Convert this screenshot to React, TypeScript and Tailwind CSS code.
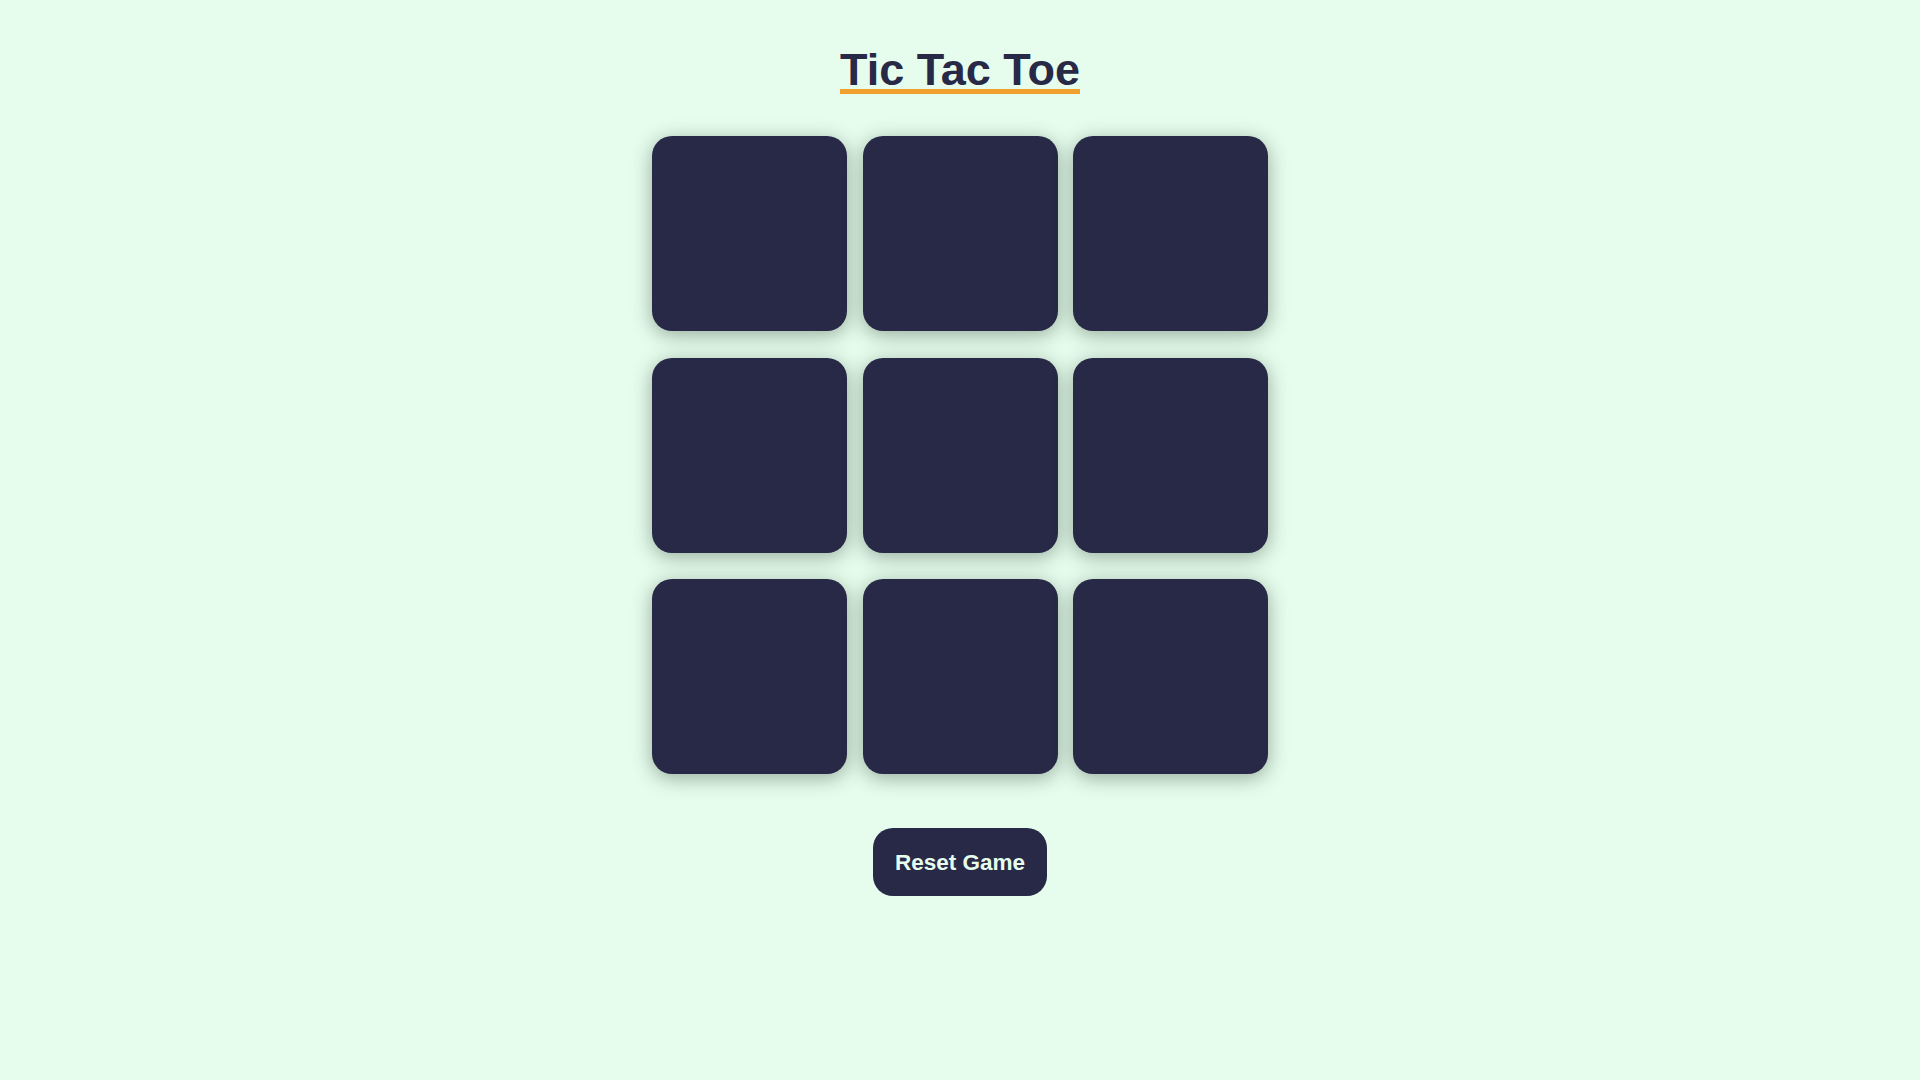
export default function App() {
  const cells = Array.from({ length: 9 }, (_, i) => i);

  return (
    <div
      className="min-h-screen w-full bg-[#e6fdee] flex flex-col items-center pt-[44px]"
      style={{ fontFamily: '"Liberation Sans", Arial, sans-serif' }}
    >
      <h1 className="text-[45px] leading-[52px] font-bold text-[#282946] underline decoration-[#f0a02f] decoration-[5px] underline-offset-[4px]">
        Tic Tac Toe
      </h1>

      <div className="mt-[40px] grid grid-cols-[repeat(3,195px)] gap-x-[15.5px] gap-y-[26.5px]">
        {cells.map((i) => (
          <button
            key={i}
            className="w-[195px] h-[195px] rounded-[20px] bg-[#282946] shadow-[0_4px_20px_rgba(30,50,30,0.4)]"
          />
        ))}
      </div>

      <button className="mt-[54px] h-[68px] px-[22px] pt-[2px] rounded-[20px] bg-[#282946] text-[#e6fdee] text-[22.5px] font-bold">
        Reset Game
      </button>
    </div>
  );
}
